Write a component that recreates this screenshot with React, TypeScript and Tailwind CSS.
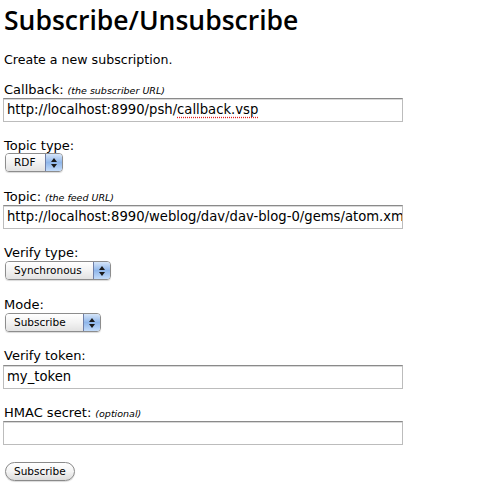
import React from 'react';

const font = { fontFamily: '"DejaVu Sans", Verdana, sans-serif' };

const TextBox = ({ children }: { children?: React.ReactNode }) => (
    <div className="w-[400px] h-[24px] bg-white border border-[#bcbcbc] border-t-[#8a8a8a] shadow-[inset_0_1px_0_#d8d8d8] px-[3px] flex items-center text-[13.2px] text-black whitespace-nowrap overflow-hidden">
        {children}
    </div>
);

const Select = ({ label, width }: { label: string; width: string }) => (
    <div className={`${width} h-[19px] flex rounded-[4px] border border-[#8d8d8d] overflow-hidden shadow-[0_1px_1px_rgba(0,0,0,0.15)]`}>
        <div className="flex-1 bg-gradient-to-b from-white via-[#f3f3f3] to-[#e2e2e2] text-[10.5px] leading-[17px] pl-[8px] text-black">
            {label}
        </div>
        <div className="w-[17px] border-l border-[#6f7fa8] bg-gradient-to-b from-[#d6e5f8] via-[#8fb6ea] to-[#c3dcfa] flex flex-col items-center justify-center gap-[2px]">
            <svg width="6" height="4" viewBox="0 0 6 4"><path d="M3 0 L6 4 L0 4 Z" fill="#1a1a1a" /></svg>
            <svg width="6" height="4" viewBox="0 0 6 4"><path d="M0 0 L6 0 L3 4 Z" fill="#1a1a1a" /></svg>
        </div>
    </div>
);

const Label = ({ text, note }: { text: string; note?: string }) => (
    <div className="text-[13px] leading-[14px] text-black">
        {text}
        {note && <span className="italic text-[9.5px] ml-[4px]">({note})</span>}
    </div>
);

export default function App() {
    return (
        <div className="bg-white w-[484px] h-[499px] px-[4px] text-black" style={font}>
            <h1
                className="text-[26.5px] leading-[32px] font-semibold pt-[4px]"
                style={{ fontFamily: '"Open Sans", "DejaVu Sans", sans-serif' }}
            >
                Subscribe/Unsubscribe
            </h1>

            <p className="text-[12.6px] leading-[16px] mt-[16px]">Create a new subscription.</p>

            <div className="mt-[15px] flex flex-col">
                <Label text="Callback:" note="the subscriber URL" />
                <div className="-ml-[1px]">
                    <TextBox>
                        http://localhost:8990/psh/
                        <span className="underline decoration-dotted decoration-[#e02020] underline-offset-[3px]">callback.vsp</span>
                    </TextBox>
                </div>

                <div className="mt-[17px]"><Label text="Topic type:" /></div>
                <div className="ml-[1px]"><Select label="RDF" width="w-[58px]" /></div>

                <div className="mt-[18px]"><Label text="Topic:" note="the feed URL" /></div>
                <div className="-ml-[1px]">
                    <TextBox>http://localhost:8990/weblog/dav/dav-blog-0/gems/atom.xml</TextBox>
                </div>

                <div className="mt-[17px]"><Label text="Verify type:" /></div>
                <div className="mt-[1px] ml-[1px]"><Select label="Synchronous" width="w-[106px]" /></div>

                <div className="mt-[18px]"><Label text="Mode:" /></div>
                <div className="mt-[1px] ml-[1px]"><Select label="Subscribe" width="w-[96px]" /></div>

                <div className="mt-[17px]"><Label text="Verify token:" /></div>
                <div className="-ml-[1px] mt-[2px]"><TextBox>my_token</TextBox></div>

                <div className="mt-[17px]"><Label text="HMAC secret:" note="optional" /></div>
                <div className="-ml-[1px]"><TextBox /></div>

                <div className="mt-[13px] ml-[1px]">
                    <button className="h-[19px] px-[8px] rounded-full border border-[#8a8a8a] bg-gradient-to-b from-white via-[#f4f4f4] to-[#dcdcdc] text-[10.5px] leading-[17px] text-black shadow-[0_1px_1px_rgba(0,0,0,0.15)]">
                        Subscribe
                    </button>
                </div>
            </div>
        </div>
    );
}
